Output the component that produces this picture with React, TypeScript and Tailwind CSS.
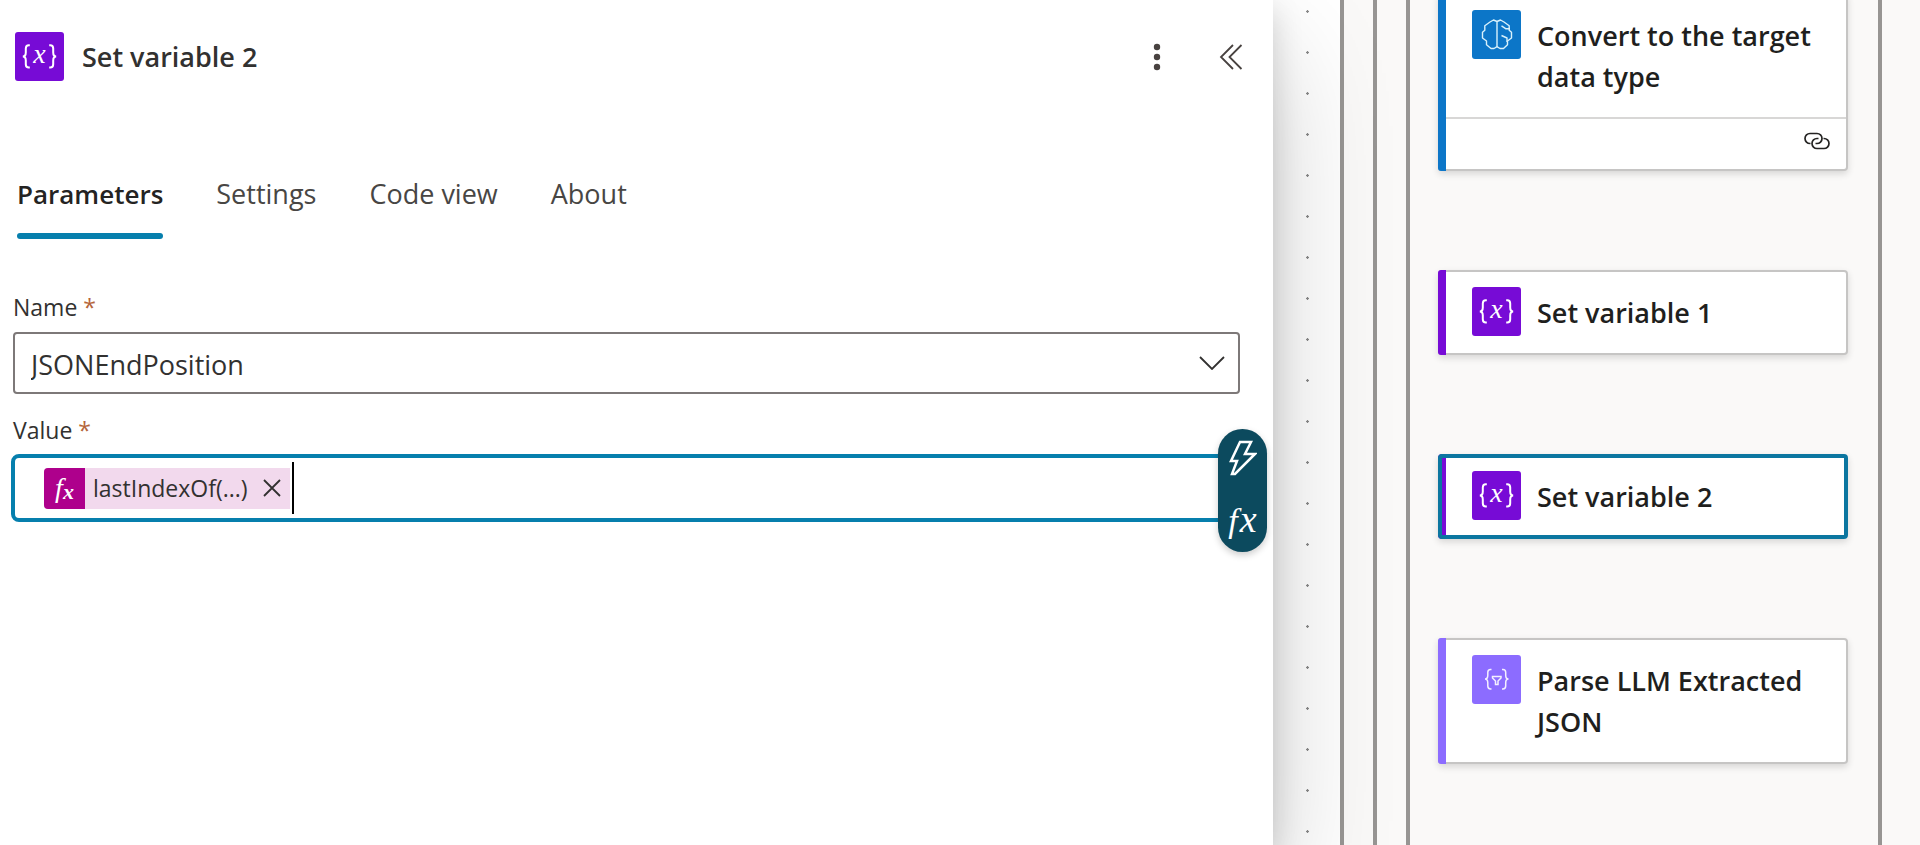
import { useState } from "react";
import type { ReactNode } from "react";

function VariableIcon() {
  return (
    <svg viewBox="0 0 49 49" className="size-[49px] shrink-0" aria-hidden="true">
      <rect width="49" height="49" rx="3" fill="#770bd6" />
      <g fill="none" stroke="#fff" strokeWidth="2">
        <path d="M14.800 13.200h-1q-3 0-3 3.400v3.800q0 4-3 4 3 0 3 4v3.800q0 3.400 3 3.400h1" />
        <path d="M34.200 13.200h1q3 0 3 3.400v3.800q0 4 3 4-3 0-3 4v3.800q0 3.400-3 3.400h-1" />
      </g>
      <text x="24.500" y="30.500" textAnchor="middle" fill="#fff" fontSize="28" fontStyle="italic" fontFamily="'Liberation Serif', serif">x</text>
    </svg>
  );
}

function BrainIcon() {
  return (
    <svg viewBox="0 0 49 49" className="size-[49px] shrink-0" aria-hidden="true">
      <rect width="49" height="49" rx="3" fill="#0c76c8" />
      <g fill="none" stroke="#d8f1fb" strokeWidth="1.400" strokeLinejoin="round">
        <path d="M25 11.500L21.500 10l-3.500 2-5.200 3.800v4.400l-2.300 2V28l4 3v3.800l4.500 3.700H22l3-1.800z" />
        <path d="M25 11.500L28.500 10l3.500 2 5.200 3.800v4.400l2.300 2V28l-4 3v3.800L31.500 38.500H28l-3-1.800" />
        <path d="M29.500 15.800l4.500 3h4M29.500 25.500l5.500 2.500v4" />
      </g>
    </svg>
  );
}

function ParseIcon() {
  return (
    <svg viewBox="0 0 49 49" className="size-[49px] shrink-0" aria-hidden="true">
      <rect width="49" height="49" rx="3" fill="#8c6cff" />
      <g fill="none" stroke="#f4f0ff" strokeWidth="1.500">
        <path d="M19.500 14.500h-1q-2.700 0-2.700 2.800v3q0 3.800-2.800 3.800 2.800 0 2.800 3.800v3.200q0 2.900 2.700 2.900h1" />
        <path d="M30 14.500h1q2.700 0 2.700 2.800v3q0 3.800 2.800 3.800-2.800 0-2.800 3.800v3.200q0 2.900-2.700 2.900h-1" />
        <path d="M20.500 21.500h8.500v1.500l-3 3v3.500h-2.500V26l-3-3z" />
      </g>
    </svg>
  );
}

function Card({
  title,
  icon,
  accent,
  selected = false,
  footer,
}: {
  title: string;
  icon: ReactNode;
  accent: string;
  selected?: boolean;
  footer?: ReactNode;
}) {
  return (
    <article
      className={`relative flex rounded-[4px] bg-white shadow-[0_3px_7px_rgba(0,0,0,0.14)] ${
        selected ? "" : "border-y-2 border-r-2 border-[#c6c5c4]"
      }`}
    >
      <div className={`w-2 shrink-0 ${accent} ${selected ? "rounded-l-[4px]" : "-my-0.5 rounded-l-[3px]"}`} />
      <div className="min-w-0 flex-1">
        <div className={`flex items-start gap-4 pl-[26px] pr-3 ${selected ? "py-0.5" : ""}`}>
          <div className="my-[15px]">{icon}</div>
          <h2 className="my-5 text-[27px] leading-[41px] font-semibold text-[#1f1f1e]">{title}</h2>
        </div>
        {footer}
      </div>
      {selected && <div className="absolute inset-0 rounded-[4px] border-4 border-[#0b76a0]" />}
    </article>
  );
}

const tabs = ["Parameters", "Settings", "Code view", "About"];

export default function App() {
  const [active, setActive] = useState("Parameters");
  return (
    <div className="flex h-screen overflow-hidden bg-white font-['Segoe_UI','Open_Sans',sans-serif] text-[#323130]">
      <section className="relative z-10 min-w-0 flex-1 bg-white shadow-[0_51px_115px_rgba(0,0,0,0.2),0_10px_29px_rgba(0,0,0,0.16)]">
        <header className="flex items-center pt-8 pr-[26px] pl-[15px]">
          <VariableIcon />
          <h1 className="ml-[18px] flex-1 text-[27px] leading-[41px] font-semibold">Set variable 2</h1>
          <button type="button" aria-label="More options" className="mr-[42px] flex h-10 w-8 items-center justify-center">
            <svg viewBox="0 0 8 28" className="h-7 w-2" fill="#484240">
              <circle cx="4" cy="4" r="3.200" />
              <circle cx="4" cy="14" r="3.200" />
              <circle cx="4" cy="24" r="3.200" />
            </svg>
          </button>
          <button type="button" aria-label="Collapse panel" className="flex h-10 w-8 items-center justify-center">
            <svg viewBox="0 0 24 26" className="h-[26px] w-6" fill="none" stroke="#484240" strokeWidth="1.800">
              <path d="M14 1L2 13l12 12M22.500 1l-12 12 12 12" />
            </svg>
          </button>
        </header>

        <div role="tablist" className="mt-[88px] flex gap-[53px] pl-[17px]">
          {tabs.map((tab) => (
            <button
              key={tab}
              type="button"
              role="tab"
              aria-selected={active === tab}
              onClick={() => setActive(tab)}
              className={`flex flex-col leading-[50px] ${
                active === tab ? "text-[26px] font-semibold text-[#242322]" : "text-[27px] text-[#484644]"
              }`}
            >
              {tab}
              <span className={`mt-3.5 h-1.5 w-full rounded-full ${active === tab ? "bg-[#067fad]" : ""}`} />
            </button>
          ))}
        </div>

        <div className="mt-[50px] pr-[33px] pl-[13px]">
          <label htmlFor="name" className="block text-[23px] leading-9">
            Name <span className="text-[#b5653a]">*</span>
          </label>
          <div className="relative mt-[7px]">
            <select
              id="name"
              defaultValue="JSONEndPosition"
              className="block h-[62px] w-full appearance-none rounded-[4px] border-2 border-[#7d7878] bg-white pt-1 pl-4 text-[27px]"
            >
              <option>JSONEndPosition</option>
            </select>
            <svg viewBox="0 0 26 14" className="pointer-events-none absolute top-6 right-[15px] h-3.5 w-[26px]" fill="none" stroke="#323130" strokeWidth="1.800">
              <path d="M1 1l12 12L25 1" />
            </svg>
          </div>

          <div id="value-label" className="mt-[18px] text-[23px] leading-9">
            Value <span className="text-[#b5653a]">*</span>
          </div>
          <div className="relative mt-1.5 -ml-0.5">
            <div
              role="textbox"
              aria-labelledby="value-label"
              tabIndex={0}
              className="flex h-[68px] items-center rounded-[8px] border-4 border-[#067fad] bg-white pl-[29px] outline-none"
            >
              <span className="flex h-[41px] items-center rounded-l-[4px] bg-[#f2d9ed]">
                <span className="flex h-full w-[41px] items-center justify-center rounded-l-[4px] bg-[#ae008c] font-['Liberation_Serif',serif] text-[28px] text-white italic">
                  f<span className="mt-1.5 text-[22px] font-bold">x</span>
                </span>
                <span className="pl-2 text-[23px]">lastIndexOf(...)</span>
                <button type="button" aria-label="Remove" className="ml-1.5 flex h-full w-9 items-center justify-center">
                  <svg viewBox="0 0 18 18" className="size-[18px]" fill="none" stroke="#323130" strokeWidth="1.800">
                    <path d="M1 1l16 16M17 1L1 17" />
                  </svg>
                </button>
              </span>
              <span className="ml-0.5 h-[52px] w-0.5 bg-black" />
            </div>
            <div className="absolute -top-[25px] -right-[27px] flex h-[123px] w-[49px] flex-col items-center justify-around rounded-full bg-[#0c4a5e] shadow-[0_3px_7px_rgba(0,0,0,0.2)]">
              <button type="button" aria-label="Insert dynamic content">
                <svg viewBox="0 0 28 36" className="h-9 w-7" fill="none" stroke="#fff" strokeWidth="2.500">
                  <path d="M11 2h11l-6 12h10L6 34H3l5-13H2z" />
                </svg>
              </button>
              <button
                type="button"
                aria-label="Insert expression"
                className="flex items-baseline gap-0.5 font-['Liberation_Serif',serif] text-[34px] leading-10 text-white italic"
              >
                <span>f</span>
                <span className="text-[38px]">x</span>
              </button>
            </div>
          </div>
        </div>
      </section>

      <main className="flex w-[647px] shrink-0 bg-[#faf9f8]">
        <div className="w-[67px] shrink-0 bg-white bg-[radial-gradient(circle,#8a8a8a_1px,transparent_1.500px)] bg-[size:67px_41px] bg-[position:1px_-9px]" />
        <div className="w-[33px] shrink-0 border-l-4 border-[#979593]" />
        <div className="w-[33px] shrink-0 border-l-4 border-[#979593]" />
        <div className="w-[476px] shrink-0 border-x-4 border-[#979593] pr-[30px] pl-7">
          <div className="-mt-[7px] flex flex-col gap-[99px]">
            <Card
              title="Convert to the target data type"
              icon={<BrainIcon />}
              accent="bg-[#0c76c8]"
              footer={
                <div className="flex h-[52px] items-center justify-end border-t-2 border-[#d8d7d6] pr-4 pb-1.5">
                  <svg viewBox="0 0 26 18" className="h-[18px] w-[26px]" fill="none" stroke="#242322" strokeWidth="1.700">
                    <path d="M6.500 11.500H6a5 5 0 0 1 0-10h7a5 5 0 0 1 0 10h-1.500" />
                    <path d="M19.500 6.500h.5a5 5 0 0 1 0 10h-7a5 5 0 0 1 0-10h1.500" />
                  </svg>
                </div>
              }
            />
            <Card title="Set variable 1" icon={<VariableIcon />} accent="bg-[#770bd6]" />
            <Card title="Set variable 2" icon={<VariableIcon />} accent="bg-[#770bd6]" selected />
            <Card title="Parse LLM Extracted JSON" icon={<ParseIcon />} accent="bg-[#8c6cff]" />
          </div>
        </div>
      </main>
    </div>
  );
}
